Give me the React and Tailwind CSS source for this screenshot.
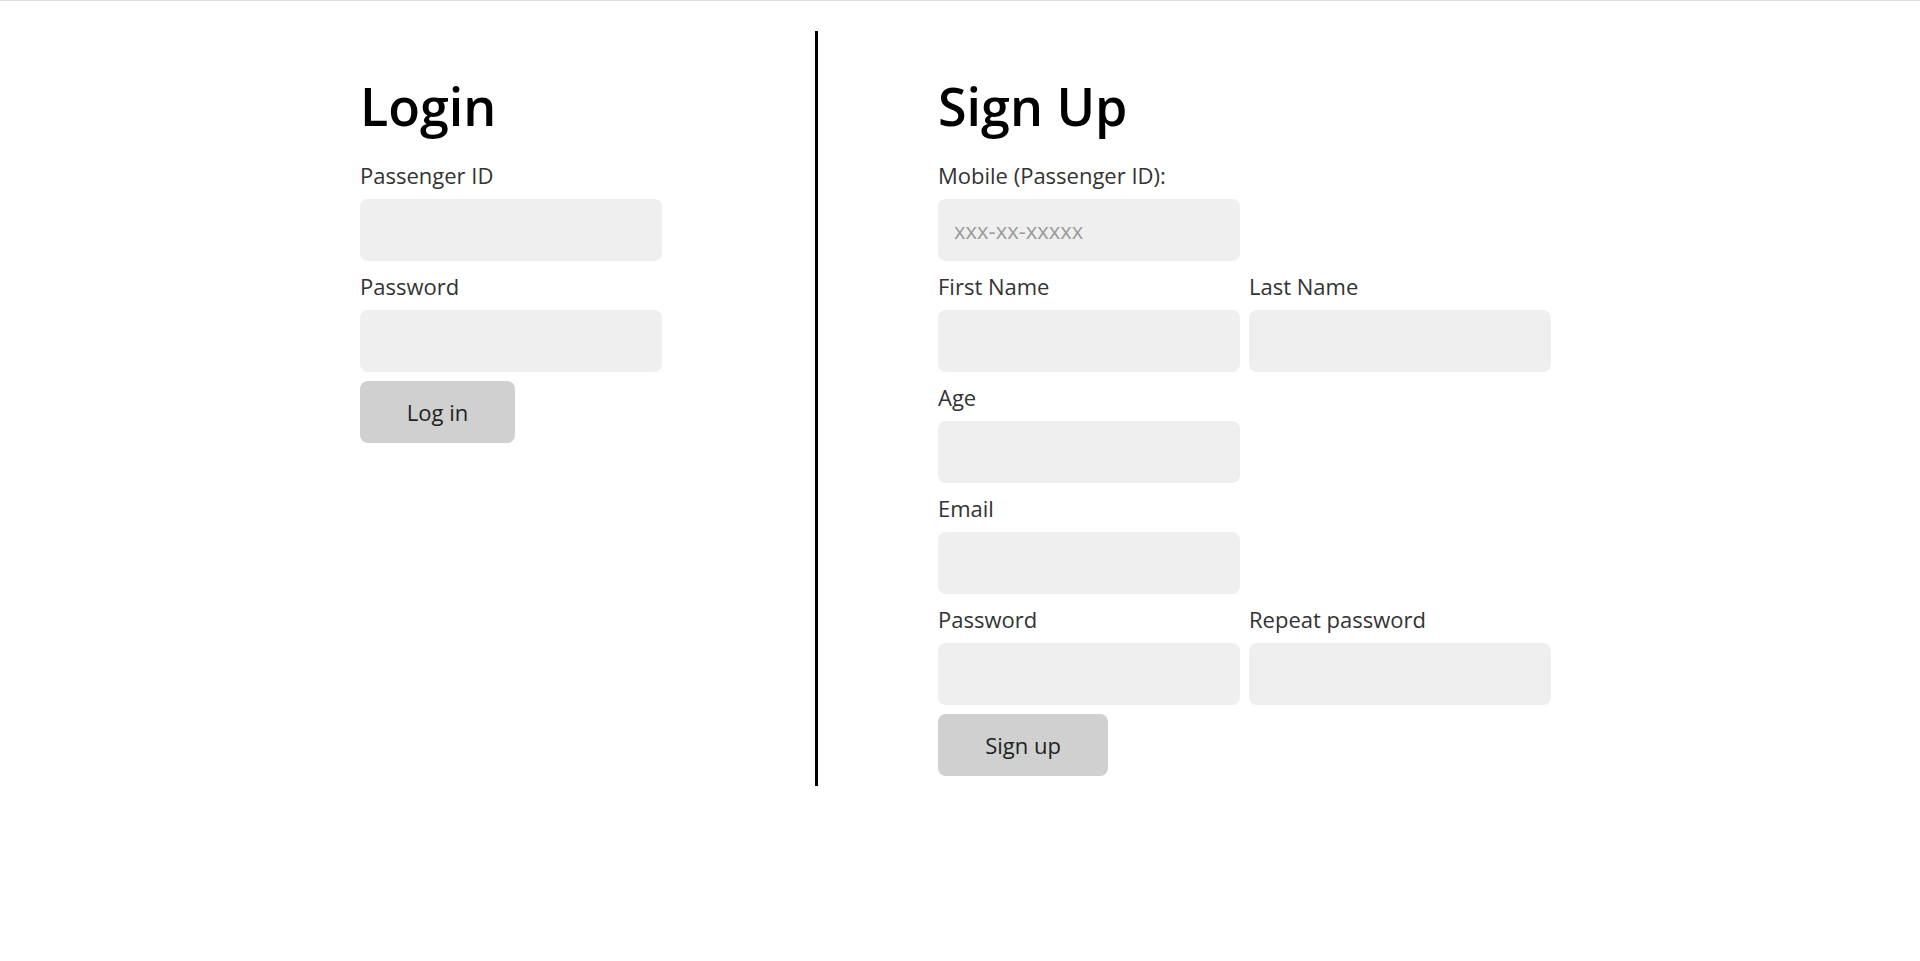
import React from "react";

const font = { fontFamily: '"Open Sans", "Noto Sans", sans-serif' };

/* ---------- Field ---------- */
function Field({ label, type = "text", placeholder }) {
  return (
    <div className="flex flex-col w-[302px] mb-[10px]">
      <label className="text-[22px] leading-[31px] text-[#333] mb-2">
        {label}
      </label>
      <input
        type={type}
        placeholder={placeholder}
        className="h-[62px] w-[302px] rounded-lg bg-[#efefef] px-4 text-[22px] text-[#333] outline-none placeholder:text-[#9a9a9a]"
      />
    </div>
  );
}

export default function App() {
  return (
    <div className="min-h-screen bg-white border-t border-[#dddddd]" style={font}>
      <div className="mx-auto mt-[30px] flex w-[1200px]">
        {/* Login */}
        <div className="w-[455px] pt-[44px]">
          <h1 className="text-[52px] leading-[62px] font-semibold text-black mb-[23px]">
            Login
          </h1>
          <Field label="Passenger ID" />
          <Field label="Password" type="password" />
          <button className="-mt-[1px] h-[62px] w-[155px] rounded-lg bg-[#d0d0d0] text-[22px] text-[#222]">
            Log in
          </button>
        </div>

        {/* Sign up */}
        <div className="border-l-[3px] border-black pl-[120px] pt-[44px] pb-[10px]">
          <h1 className="text-[52px] leading-[62px] font-semibold text-black mb-[23px]">
            Sign Up
          </h1>
          <Field label="Mobile (Passenger ID):" placeholder="xxx-xx-xxxxx" />
          <div className="grid grid-cols-[302px_302px] gap-x-[9px]">
            <Field label="First Name" />
            <Field label="Last Name" />
          </div>
          <Field label="Age" />
          <Field label="Email" type="email" />
          <div className="grid grid-cols-[302px_302px] gap-x-[9px]">
            <Field label="Password" type="password" />
            <Field label="Repeat password" type="password" />
          </div>
          <button className="-mt-[1px] h-[62px] w-[170px] rounded-lg bg-[#d0d0d0] text-[22px] text-[#222]">
            Sign up
          </button>
        </div>
      </div>
    </div>
  );
}
